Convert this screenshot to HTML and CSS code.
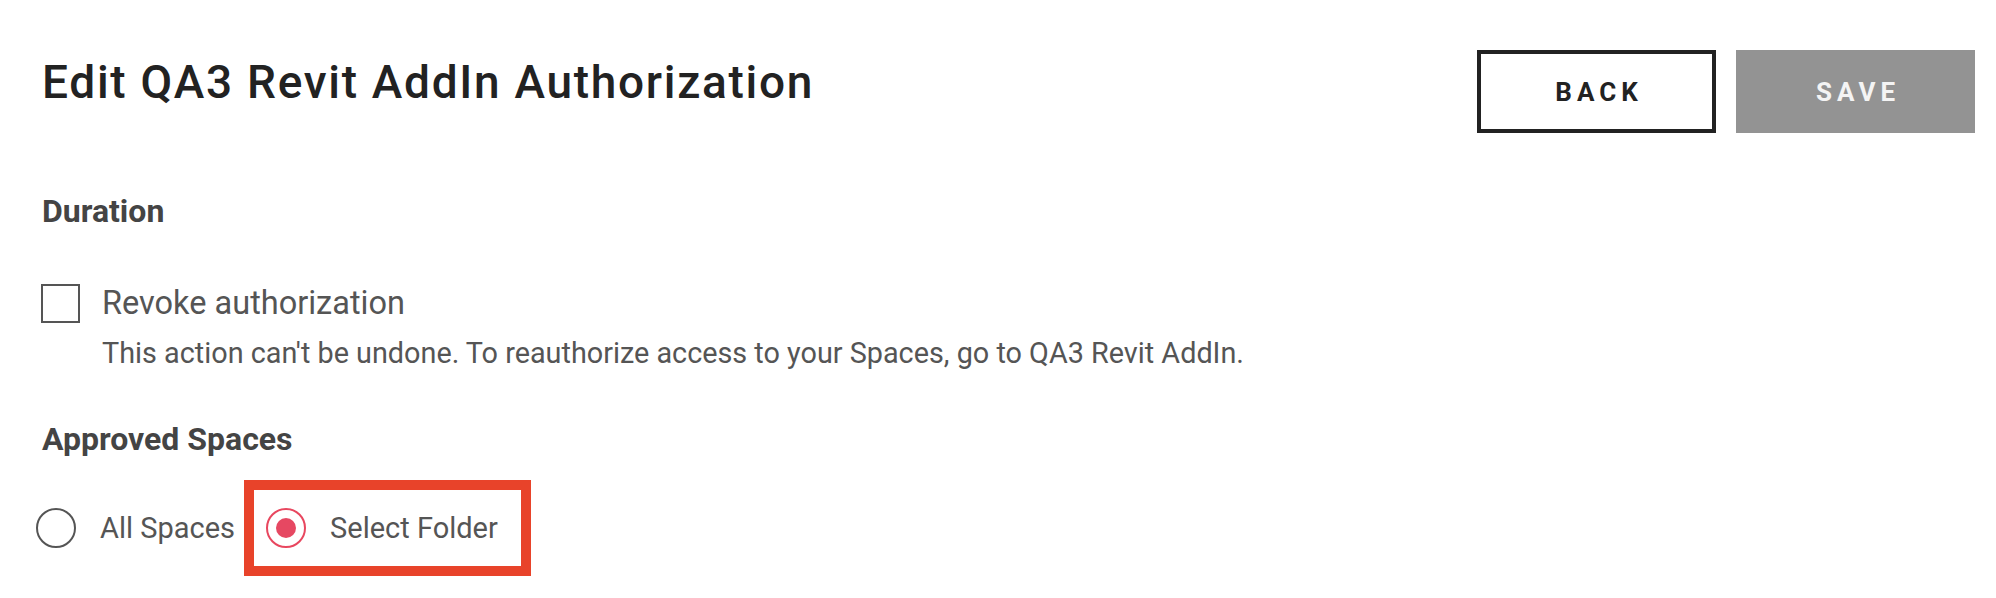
FILE: index.html
```html
<!DOCTYPE html>
<html lang="en">
<head>
    <meta charset="UTF-8">
    <meta name="viewport" content="width=device-width, initial-scale=1.0">
    <title>Edit QA3 Revit AddIn Authorization</title>
    <link rel="stylesheet" href="styles.css">
</head>
<body>
    <div class="page">
        <div class="header">
            <h1>Edit QA3 Revit AddIn Authorization</h1>
            <div class="actions">
                <button class="btn btn-back">BACK</button>
                <button class="btn btn-save" disabled>SAVE</button>
            </div>
        </div>

        <h2 class="section-title section-duration">Duration</h2>
        <label class="check-row">
            <span class="checkbox"></span>
            <span class="check-label">Revoke authorization</span>
        </label>
        <p class="hint">This action can't be undone. To reauthorize access to your Spaces, go to QA3 Revit AddIn.</p>

        <h2 class="section-title section-spaces">Approved Spaces</h2>
        <div class="radio-group">
            <label class="radio-option">
                <span class="radio"></span>
                <span class="radio-label">All Spaces</span>
            </label>
            <label class="radio-option highlighted">
                <span class="radio checked"></span>
                <span class="radio-label">Select Folder</span>
            </label>
        </div>
    </div>
</body>
</html>
```

FILE: styles.css
```css
body {
    margin: 0;
    font-family: Roboto, "Liberation Sans", Arial, sans-serif;
    background-color: #ffffff;
    color: #555555;
}

.page {
    padding: 50px 21px 0 42px;
}

.header {
    display: flex;
    justify-content: space-between;
    align-items: flex-start;
}

h1 {
    margin: 4px 0 0;
    font-size: 46px;
    line-height: 56px;
    font-weight: 500;
    letter-spacing: 1.7px;
    color: #222222;
}

.actions {
    display: flex;
    gap: 20px;
}

.btn {
    width: 239px;
    height: 83px;
    font-family: Roboto, "Liberation Sans", Arial, sans-serif;
    font-size: 26px;
    font-weight: 700;
    letter-spacing: 5px;
    padding: 0 0 0 5px;
    cursor: pointer;
}

.btn-back {
    background-color: #ffffff;
    border: 4px solid #222222;
    color: #222222;
}

.btn-save {
    background-color: #939393;
    border: none;
    color: #f4f4f4;
}

.section-title {
    margin: 0;
    font-size: 32px;
    line-height: 38px;
    font-weight: 700;
    color: #444444;
}

.section-duration {
    margin-top: 59px;
}

.section-spaces {
    margin-top: 50px;
}

.check-row {
    display: flex;
    align-items: center;
    gap: 22px;
    margin-top: 54px;
}

.checkbox {
    width: 39px;
    height: 39px;
    box-sizing: border-box;
    border: 2.5px solid #555555;
    margin-left: -1px;
}

.check-label {
    font-size: 32.5px;
    line-height: 39px;
    color: #555555;
}

.hint {
    margin: 14px 0 0 60px;
    font-size: 28.8px;
    line-height: 33px;
    color: #555555;
}

.radio-group {
    display: flex;
    align-items: center;
    gap: 9px;
    margin-top: 22px;
}

.radio-option {
    display: flex;
    align-items: center;
    gap: 24px;
    margin-left: -6px;
}

.radio-option.highlighted {
    margin-left: 0;
    height: 76px;
    padding: 0 23px 0 12px;
    border: 10px solid #e8432a;
}

.radio {
    width: 40px;
    height: 40px;
    box-sizing: border-box;
    border: 2px solid #555555;
    border-radius: 50%;
    display: flex;
    align-items: center;
    justify-content: center;
}

.radio.checked {
    border-color: #e8475f;
}

.radio.checked::after {
    content: "";
    width: 20px;
    height: 20px;
    border-radius: 50%;
    background-color: #e64862;
}

.radio-label {
    font-size: 29px;
    color: #555555;
}
```
